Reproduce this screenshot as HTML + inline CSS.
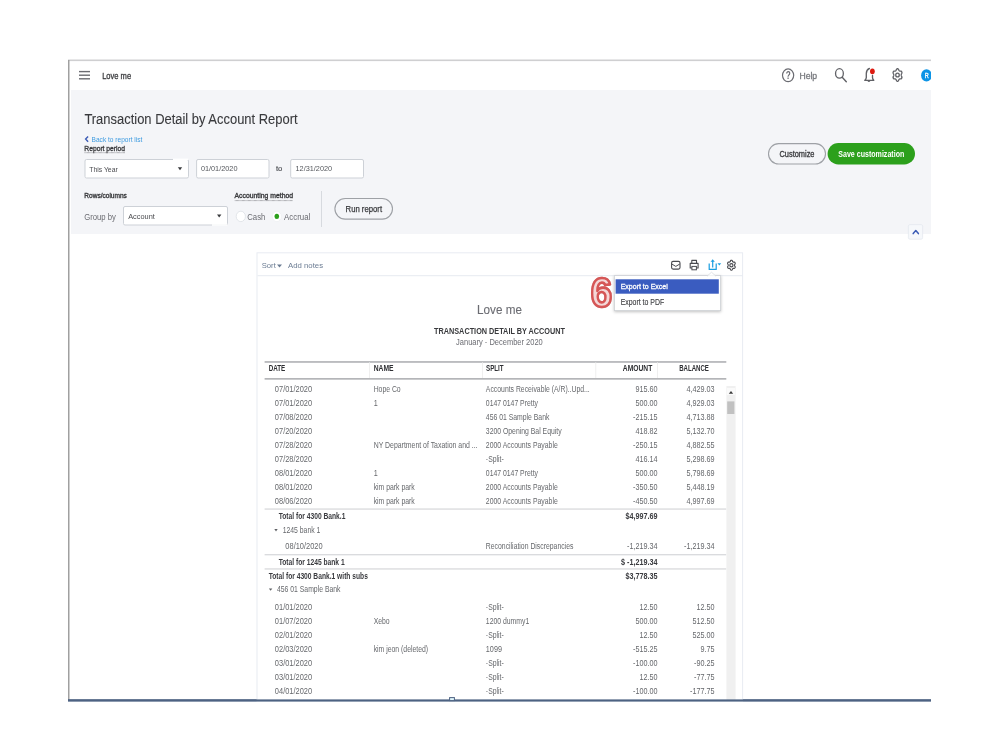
<!DOCTYPE html>
<html><head><meta charset="utf-8"><title>Transaction Detail by Account Report</title>
<style>html,body{margin:0;padding:0;background:#fff;width:999px;height:749px;overflow:hidden}
svg{display:block;will-change:transform} text{font-family:"Liberation Sans",sans-serif}</style></head>
<body><svg width="999" height="749" viewBox="0 0 999 749">
<rect x="0" y="0" width="999" height="749" fill="#ffffff" />
<rect x="68" y="60" width="863" height="640" fill="#ffffff" />
<rect x="71" y="90" width="860" height="144" fill="#f4f5f8" />
<rect x="68" y="59.5" width="863" height="1.6" fill="#cfcfd1" />
<rect x="68" y="60" width="1.5" height="640" fill="#a0a0a0" />
<rect x="68" y="699.4" width="863" height="2" fill="#4d6282" />
<rect x="79" y="70.89999999999999" width="11" height="1.4" fill="#6b6c72" />
<rect x="79" y="74.5" width="11" height="1.4" fill="#6b6c72" />
<rect x="79" y="78.1" width="11" height="1.4" fill="#6b6c72" />
<text x="102.14" y="79.00" font-size="9.10" fill="#393a3d" font-weight="400" textLength="28.98" lengthAdjust="spacingAndGlyphs" text-anchor="start" stroke="#393a3d" stroke-width="0.3" >Love me</text>
<ellipse cx="788.1" cy="75.3" rx="5.6" ry="6.4" fill="none" stroke="#6b6c72" stroke-width="1.2"/>
<text x="788.20" y="79.30" font-size="10.50" fill="#6b6c72" font-weight="700" textLength="5.00" lengthAdjust="spacingAndGlyphs" text-anchor="middle" stroke="#6b6c72" stroke-width="0" >?</text>
<text x="799.42" y="78.75" font-size="9.45" fill="#75777c" font-weight="400" textLength="17.76" lengthAdjust="spacingAndGlyphs" text-anchor="start" stroke="#75777c" stroke-width="0.3" >Help</text>
<ellipse cx="839.45" cy="73.4" rx="3.9" ry="4.7" fill="none" stroke="#606166" stroke-width="1.3"/>
<line x1="842.2" y1="77.2" x2="846.3" y2="81.7" stroke="#606166" stroke-width="1.4" stroke-linecap="round"/>
<path d="M869.4,68.5 Q866.5,69.6 866.3,73.4 L866.3,77.6 Q866.1,79.4 864.8,80.3 L873.8,80.3 Q872.6,79.4 872.5,77.6 L872.5,75.4" fill="none" stroke="#606166" stroke-width="1.35" stroke-linejoin="round" stroke-linecap="round"/>
<path d="M867.3,80.8 Q868.9,83.2 870.5,80.8 Z" fill="#606166"/>
<ellipse cx="872.4" cy="71.35" rx="2.4" ry="2.9" fill="#dd1a10"/>
<path d="M901.22,75.00 L901.24,75.32 L901.30,75.64 L901.41,76.00 L901.67,76.43 L901.90,76.92 L901.93,77.36 L901.87,77.77 L901.74,78.15 L901.55,78.48 L901.30,78.75 L900.99,78.94 L900.55,78.92 L900.13,78.85 L899.83,78.91 L899.58,79.01 L899.36,79.15 L899.16,79.33 L898.97,79.55 L898.78,79.85 L898.62,80.36 L898.41,80.85 L898.13,81.11 L897.82,81.25 L897.50,81.30 L897.18,81.25 L896.87,81.11 L896.59,80.85 L896.38,80.36 L896.22,79.85 L896.03,79.55 L895.84,79.33 L895.64,79.15 L895.42,79.01 L895.17,78.91 L894.87,78.85 L894.45,78.92 L894.01,78.94 L893.70,78.75 L893.45,78.48 L893.26,78.15 L893.13,77.77 L893.07,77.36 L893.10,76.92 L893.33,76.43 L893.59,76.00 L893.70,75.64 L893.76,75.32 L893.78,75.00 L893.76,74.68 L893.70,74.36 L893.59,74.00 L893.33,73.57 L893.10,73.08 L893.07,72.64 L893.13,72.23 L893.26,71.85 L893.45,71.52 L893.70,71.25 L894.01,71.06 L894.45,71.08 L894.87,71.15 L895.17,71.09 L895.42,70.99 L895.64,70.85 L895.84,70.67 L896.03,70.45 L896.22,70.15 L896.38,69.64 L896.59,69.15 L896.87,68.89 L897.18,68.75 L897.50,68.70 L897.82,68.75 L898.13,68.89 L898.41,69.15 L898.62,69.64 L898.78,70.15 L898.97,70.45 L899.16,70.67 L899.36,70.85 L899.58,70.99 L899.83,71.09 L900.13,71.15 L900.55,71.08 L900.99,71.06 L901.30,71.25 L901.55,71.52 L901.74,71.85 L901.87,72.23 L901.93,72.64 L901.90,73.08 L901.67,73.57 L901.41,74.00 L901.30,74.36 L901.24,74.68 Z" fill="none" stroke="#606166" stroke-width="1.3" stroke-linejoin="round"/>
<ellipse cx="897.5" cy="75.0" rx="1.76" ry="1.95" fill="none" stroke="#606166" stroke-width="1.3"/>
<ellipse cx="926.5" cy="75.4" rx="5.4" ry="6.2" fill="#0d94e6"/>
<text x="926.80" y="78.20" font-size="8.00" fill="#ffffff" font-weight="400" textLength="4.00" lengthAdjust="spacingAndGlyphs" text-anchor="middle" stroke="#ffffff" stroke-width="0.35" >R</text>
<rect x="931" y="55" width="68" height="60" fill="#ffffff" />
<text x="84.39" y="123.90" font-size="15.20" fill="#393a3d" font-weight="400" textLength="213.22" lengthAdjust="spacingAndGlyphs" text-anchor="start" stroke="#393a3d" stroke-width="0.1" >Transaction Detail by Account Report</text>
<path d="M88.1,136.4 L85.6,139.1 L88.1,141.8" fill="none" stroke="#3b5bb5" stroke-width="1.4"/>
<text x="91.59" y="141.80" font-size="7.80" fill="#3d9be0" font-weight="400" textLength="50.72" lengthAdjust="spacingAndGlyphs" text-anchor="start" stroke="#3d9be0" stroke-width="0" >Back to report list</text>
<text x="84.28" y="150.60" font-size="8.00" fill="#393a3d" font-weight="400" textLength="40.84" lengthAdjust="spacingAndGlyphs" text-anchor="start" stroke="#393a3d" stroke-width="0.35" >Report period</text>
<line x1="84.6" y1="152.7" x2="125" y2="152.7" stroke="#77797e" stroke-width="0.8" stroke-dasharray="0.7,0.5"/>
<rect x="85.0" y="159.5" width="103.5" height="18.5" fill="#ffffff" stroke="#cdd1d7" stroke-width="1" rx="1.5"/>
<rect x="173" y="158.6" width="15.3" height="1.6" fill="#ffffff" />
<text x="89.20" y="171.50" font-size="7.60" fill="#4a4b4f" font-weight="400" textLength="28.61" lengthAdjust="spacingAndGlyphs" text-anchor="start" stroke="#4a4b4f" stroke-width="0" >This Year</text>
<path d="M177.8,167.3 L182.2,167.3 L180,170.3 Z" fill="#393a3d"/>
<rect x="196.6" y="159.5" width="72.4" height="18.5" fill="#ffffff" stroke="#cdd1d7" stroke-width="1" rx="1.5"/>
<text x="200.90" y="171.10" font-size="7.60" fill="#54575c" font-weight="400" textLength="36.61" lengthAdjust="spacingAndGlyphs" text-anchor="start" stroke="#54575c" stroke-width="0" >01/01/2020</text>
<text x="275.90" y="171.10" font-size="7.60" fill="#55575c" font-weight="400" textLength="6.41" lengthAdjust="spacingAndGlyphs" text-anchor="start" stroke="#55575c" stroke-width="0.2" >to</text>
<rect x="290.7" y="159.5" width="72.8" height="18.5" fill="#ffffff" stroke="#cdd1d7" stroke-width="1" rx="1.5"/>
<text x="295.50" y="171.10" font-size="7.60" fill="#54575c" font-weight="400" textLength="36.61" lengthAdjust="spacingAndGlyphs" text-anchor="start" stroke="#54575c" stroke-width="0" >12/31/2020</text>
<text x="84.33" y="198.20" font-size="6.80" fill="#393a3d" font-weight="400" textLength="42.54" lengthAdjust="spacingAndGlyphs" text-anchor="start" stroke="#393a3d" stroke-width="0.35" >Rows/columns</text>
<text x="84.26" y="219.60" font-size="8.60" fill="#6b6c72" font-weight="400" textLength="31.69" lengthAdjust="spacingAndGlyphs" text-anchor="start" stroke="#6b6c72" stroke-width="0" >Group by</text>
<rect x="123.5" y="206.5" width="104" height="18.5" fill="#ffffff" stroke="#cdd1d7" stroke-width="1" rx="1.5"/>
<rect x="212" y="224.2" width="15.3" height="1.6" fill="#ffffff" />
<text x="128.20" y="218.60" font-size="7.60" fill="#4a4b4f" font-weight="400" textLength="26.61" lengthAdjust="spacingAndGlyphs" text-anchor="start" stroke="#4a4b4f" stroke-width="0" >Account</text>
<path d="M217,214.6 L221.4,214.6 L219.2,217.6 Z" fill="#393a3d"/>
<text x="234.52" y="198.00" font-size="7.00" fill="#393a3d" font-weight="400" textLength="58.56" lengthAdjust="spacingAndGlyphs" text-anchor="start" stroke="#393a3d" stroke-width="0.35" >Accounting method</text>
<line x1="234.8" y1="200.6" x2="292.8" y2="200.6" stroke="#77797e" stroke-width="0.8" stroke-dasharray="0.7,0.5"/>
<ellipse cx="240.8" cy="216.4" rx="4.6" ry="5.2" fill="#ffffff" stroke="#dcdfe4" stroke-width="0.8"/>
<text x="247.26" y="219.60" font-size="8.60" fill="#6b6c72" font-weight="400" textLength="18.09" lengthAdjust="spacingAndGlyphs" text-anchor="start" stroke="#6b6c72" stroke-width="0" >Cash</text>
<ellipse cx="276.8" cy="216.4" rx="4.6" ry="5.2" fill="#ffffff" stroke="#eef0f2" stroke-width="0.8"/>
<ellipse cx="276.8" cy="216.4" rx="2.3" ry="2.6" fill="#2ca01c"/>
<text x="284.06" y="219.60" font-size="8.60" fill="#6b6c72" font-weight="400" textLength="26.29" lengthAdjust="spacingAndGlyphs" text-anchor="start" stroke="#6b6c72" stroke-width="0" >Accrual</text>
<rect x="321" y="191" width="0.9" height="36" fill="#d4d7dc" />
<rect x="334.9" y="198.5" width="57.6" height="20.6" rx="10.3" fill="#f4f5f8" stroke="#9ea1a6" stroke-width="1.1"/>
<text x="363.80" y="212.00" font-size="8.80" fill="#393a3d" font-weight="400" textLength="36.50" lengthAdjust="spacingAndGlyphs" text-anchor="middle" stroke="#393a3d" stroke-width="0.25" >Run report</text>
<rect x="768.5" y="143.6" width="57" height="20.4" rx="10.2" fill="#f4f5f8" stroke="#9ea1a6" stroke-width="1.1"/>
<text x="797.00" y="157.00" font-size="8.20" fill="#393a3d" font-weight="400" textLength="35.00" lengthAdjust="spacingAndGlyphs" text-anchor="middle" stroke="#393a3d" stroke-width="0.3" >Customize</text>
<rect x="827.6" y="143" width="87.4" height="21.4" rx="10.7" fill="#2ca01c"/>
<text x="871.30" y="157.00" font-size="8.20" fill="#ffffff" font-weight="700" textLength="66.00" lengthAdjust="spacingAndGlyphs" text-anchor="middle" stroke="#ffffff" stroke-width="0" >Save customization</text>
<rect x="908.4" y="224.6" width="14.2" height="14.6" rx="1.5" fill="#f6f8fb" stroke="#e3e7ee" stroke-width="0.7"/>
<path d="M913.2,233.6 L915.8,230.6 L918.4,233.6" fill="none" stroke="#3b5bb5" stroke-width="1.5" stroke-linecap="round" stroke-linejoin="round"/>
<rect x="257" y="252.8" width="485.6" height="448" fill="#ffffff" stroke="#e8ecf2" stroke-width="1"/>
<rect x="257.5" y="275.2" width="485" height="1" fill="#e6eaf0" />
<text x="261.71" y="268.30" font-size="7.20" fill="#6b7c93" font-weight="400" textLength="14.08" lengthAdjust="spacingAndGlyphs" text-anchor="start" stroke="#6b7c93" stroke-width="0" >Sort</text>
<path d="M277,264.4 L282,264.4 L279.5,267.4 Z" fill="#6b7c93"/>
<text x="288.01" y="268.30" font-size="7.20" fill="#6b7c93" font-weight="400" textLength="35.08" lengthAdjust="spacingAndGlyphs" text-anchor="start" stroke="#6b7c93" stroke-width="0" >Add notes</text>
<rect x="671.6" y="261.4" width="8.4" height="7.7" rx="1.5" fill="none" stroke="#4a4b50" stroke-width="1.1"/>
<path d="M671.8,264 L675.8,266.4 L679.8,264" fill="none" stroke="#4a4b50" stroke-width="1" stroke-linejoin="round"/>
<path d="M691.8,263.2 L691.8,260.4 L696.5,260.4 L696.5,263.2 M690.2,263.4 L698.1,263.4 L698.1,268 L690.2,268 Z" fill="none" stroke="#4a4b50" stroke-width="1.1" stroke-linejoin="round"/>
<rect x="691.9" y="266.4" width="4.5" height="3.4" fill="#ffffff" stroke="#4a4b50" stroke-width="1"/>
<path d="M709.2,263.4 L709.2,269.4 L716.2,269.4 L716.2,263.4" fill="none" stroke="#1a9ee0" stroke-width="1.2" stroke-linejoin="round"/>
<path d="M712.7,267.4 L712.7,261" fill="none" stroke="#1a9ee0" stroke-width="1.2"/>
<path d="M710.6,261.8 L712.7,259.2 L714.8,261.8 Z" fill="#1a9ee0"/>
<path d="M717.5,263.3 L721.2,263.3 L719.35,265.6 Z" fill="#1a9ee0"/>
<path d="M734.59,265.20 L734.61,265.45 L734.66,265.71 L734.75,265.99 L734.97,266.34 L735.17,266.72 L735.19,267.07 L735.15,267.40 L735.04,267.70 L734.87,267.96 L734.66,268.18 L734.39,268.32 L734.01,268.31 L733.65,268.25 L733.40,268.30 L733.19,268.38 L733.00,268.49 L732.82,268.63 L732.66,268.81 L732.50,269.05 L732.36,269.45 L732.18,269.85 L731.94,270.05 L731.67,270.16 L731.40,270.20 L731.13,270.16 L730.86,270.05 L730.62,269.85 L730.44,269.45 L730.30,269.05 L730.14,268.81 L729.98,268.63 L729.80,268.49 L729.61,268.38 L729.40,268.30 L729.15,268.25 L728.79,268.31 L728.41,268.32 L728.14,268.18 L727.93,267.96 L727.76,267.70 L727.65,267.40 L727.61,267.07 L727.63,266.72 L727.83,266.34 L728.05,265.99 L728.14,265.71 L728.19,265.45 L728.21,265.20 L728.19,264.95 L728.14,264.69 L728.05,264.41 L727.83,264.06 L727.63,263.68 L727.61,263.33 L727.65,263.00 L727.76,262.70 L727.93,262.44 L728.14,262.22 L728.41,262.08 L728.79,262.09 L729.15,262.15 L729.40,262.10 L729.61,262.02 L729.80,261.91 L729.98,261.77 L730.14,261.59 L730.30,261.35 L730.44,260.95 L730.62,260.55 L730.86,260.35 L731.13,260.24 L731.40,260.20 L731.67,260.24 L731.94,260.35 L732.18,260.55 L732.36,260.95 L732.50,261.35 L732.66,261.59 L732.82,261.77 L733.00,261.91 L733.19,262.02 L733.40,262.10 L733.65,262.15 L734.01,262.09 L734.39,262.08 L734.66,262.22 L734.87,262.44 L735.04,262.70 L735.15,263.00 L735.19,263.33 L735.17,263.68 L734.97,264.06 L734.75,264.41 L734.66,264.69 L734.61,264.95 Z" fill="none" stroke="#4a4b50" stroke-width="1.15" stroke-linejoin="round"/>
<ellipse cx="731.4" cy="265.2" rx="1.60" ry="1.65" fill="none" stroke="#4a4b50" stroke-width="1.15"/>
<rect x="614.4" y="275.6" width="106.2" height="35" fill="#ffffff" stroke="#cfd2d6" stroke-width="0.8" style="filter:drop-shadow(0 1px 1.5px rgba(0,0,0,0.25))"/>
<path d="M707.5,275.9 L711.5,272.2 L715.5,275.9 Z" fill="#ffffff" stroke="#cfd2d6" stroke-width="0.6"/>
<rect x="707.8" y="275.7" width="7.4" height="1.2" fill="#ffffff" />
<rect x="615.6" y="279.3" width="103.2" height="14.4" fill="#3a5cc0" />
<text x="620.68" y="289.40" font-size="8.00" fill="#ffffff" font-weight="400" textLength="47.14" lengthAdjust="spacingAndGlyphs" text-anchor="start" stroke="#ffffff" stroke-width="0.3" >Export to Excel</text>
<text x="620.66" y="304.50" font-size="8.60" fill="#393a3d" font-weight="400" textLength="43.49" lengthAdjust="spacingAndGlyphs" text-anchor="start" stroke="#393a3d" stroke-width="0.1" >Export to PDF</text>
<text x="601.4" y="306.6" font-size="42" font-weight="700" text-anchor="middle" textLength="21.4" lengthAdjust="spacingAndGlyphs" fill="#f4d8d8" stroke="#d65656" stroke-width="2.6" stroke-linejoin="round" style="filter:drop-shadow(0.5px 0.8px 0.5px rgba(110,0,0,0.35))" font-family="Liberation Sans">6</text>
<text x="477.08" y="314.00" font-size="13.00" fill="#6b6c72" font-weight="400" textLength="44.84" lengthAdjust="spacingAndGlyphs" text-anchor="start" stroke="#6b6c72" stroke-width="0.1" >Love me</text>
<text x="434.03" y="334.40" font-size="9.20" fill="#393a3d" font-weight="700" textLength="130.94" lengthAdjust="spacingAndGlyphs" text-anchor="start" stroke="#393a3d" stroke-width="0" >TRANSACTION DETAIL BY ACCOUNT</text>
<text x="456.06" y="345.00" font-size="8.60" fill="#6b6c72" font-weight="400" textLength="86.69" lengthAdjust="spacingAndGlyphs" text-anchor="start" stroke="#6b6c72" stroke-width="0" >January - December 2020</text>
<rect x="264.6" y="361.1" width="461.69999999999993" height="1.7" fill="#b4b5b8" />
<rect x="264.6" y="378.0" width="461.69999999999993" height="1.7" fill="#b4b5b8" />
<rect x="369" y="362.2" width="0.8" height="15.8" fill="#ebebeb" />
<rect x="482" y="362.2" width="0.8" height="15.8" fill="#ebebeb" />
<rect x="595.4" y="362.2" width="0.8" height="15.8" fill="#ebebeb" />
<rect x="657.2" y="362.2" width="0.8" height="15.8" fill="#ebebeb" />
<text x="268.67" y="371.30" font-size="8.30" fill="#2e2f33" font-weight="700" textLength="16.66" lengthAdjust="spacingAndGlyphs" text-anchor="start" stroke="#2e2f33" stroke-width="0" >DATE</text>
<text x="373.67" y="371.30" font-size="8.30" fill="#2e2f33" font-weight="700" textLength="19.86" lengthAdjust="spacingAndGlyphs" text-anchor="start" stroke="#2e2f33" stroke-width="0" >NAME</text>
<text x="486.07" y="371.30" font-size="8.30" fill="#2e2f33" font-weight="700" textLength="17.56" lengthAdjust="spacingAndGlyphs" text-anchor="start" stroke="#2e2f33" stroke-width="0" >SPLIT</text>
<text x="652.23" y="371.30" font-size="8.30" fill="#2e2f33" font-weight="700" textLength="29.36" lengthAdjust="spacingAndGlyphs" text-anchor="end" stroke="#2e2f33" stroke-width="0" >AMOUNT</text>
<text x="708.93" y="371.30" font-size="8.30" fill="#2e2f33" font-weight="700" textLength="29.76" lengthAdjust="spacingAndGlyphs" text-anchor="end" stroke="#2e2f33" stroke-width="0" >BALANCE</text>
<text x="274.86" y="392.00" font-size="8.40" fill="#66686c" font-weight="400" textLength="37.27" lengthAdjust="spacingAndGlyphs" text-anchor="start" stroke="#66686c" stroke-width="0" >07/01/2020</text>
<text x="373.66" y="392.00" font-size="8.40" fill="#66686c" font-weight="400" textLength="27.02" lengthAdjust="spacingAndGlyphs" text-anchor="start" stroke="#66686c" stroke-width="0" >Hope Co</text>
<text x="485.86" y="392.00" font-size="8.40" fill="#66686c" font-weight="400" textLength="103.87" lengthAdjust="spacingAndGlyphs" text-anchor="start" stroke="#66686c" stroke-width="0" >Accounts Receivable (A/R)..Upd...</text>
<text x="657.54" y="392.00" font-size="8.40" fill="#66686c" font-weight="400" textLength="22.10" lengthAdjust="spacingAndGlyphs" text-anchor="end" stroke="#66686c" stroke-width="0" >915.60</text>
<text x="714.54" y="392.00" font-size="8.40" fill="#66686c" font-weight="400" textLength="28.12" lengthAdjust="spacingAndGlyphs" text-anchor="end" stroke="#66686c" stroke-width="0" >4,429.03</text>
<text x="274.86" y="406.05" font-size="8.40" fill="#66686c" font-weight="400" textLength="37.27" lengthAdjust="spacingAndGlyphs" text-anchor="start" stroke="#66686c" stroke-width="0" >07/01/2020</text>
<text x="373.66" y="406.05" font-size="8.40" fill="#66686c" font-weight="400" textLength="4.02" lengthAdjust="spacingAndGlyphs" text-anchor="start" stroke="#66686c" stroke-width="0" >1</text>
<text x="485.86" y="406.05" font-size="8.40" fill="#66686c" font-weight="400" textLength="52.14" lengthAdjust="spacingAndGlyphs" text-anchor="start" stroke="#66686c" stroke-width="0" >0147 0147 Pretty</text>
<text x="657.54" y="406.05" font-size="8.40" fill="#66686c" font-weight="400" textLength="22.10" lengthAdjust="spacingAndGlyphs" text-anchor="end" stroke="#66686c" stroke-width="0" >500.00</text>
<text x="714.54" y="406.05" font-size="8.40" fill="#66686c" font-weight="400" textLength="28.12" lengthAdjust="spacingAndGlyphs" text-anchor="end" stroke="#66686c" stroke-width="0" >4,929.03</text>
<text x="274.86" y="420.10" font-size="8.40" fill="#66686c" font-weight="400" textLength="37.27" lengthAdjust="spacingAndGlyphs" text-anchor="start" stroke="#66686c" stroke-width="0" >07/08/2020</text>
<text x="485.86" y="420.10" font-size="8.40" fill="#66686c" font-weight="400" textLength="63.56" lengthAdjust="spacingAndGlyphs" text-anchor="start" stroke="#66686c" stroke-width="0" >456 01 Sample Bank</text>
<text x="657.54" y="420.10" font-size="8.40" fill="#66686c" font-weight="400" textLength="24.50" lengthAdjust="spacingAndGlyphs" text-anchor="end" stroke="#66686c" stroke-width="0" >-215.15</text>
<text x="714.54" y="420.10" font-size="8.40" fill="#66686c" font-weight="400" textLength="28.12" lengthAdjust="spacingAndGlyphs" text-anchor="end" stroke="#66686c" stroke-width="0" >4,713.88</text>
<text x="274.86" y="434.15" font-size="8.40" fill="#66686c" font-weight="400" textLength="37.27" lengthAdjust="spacingAndGlyphs" text-anchor="start" stroke="#66686c" stroke-width="0" >07/20/2020</text>
<text x="485.86" y="434.15" font-size="8.40" fill="#66686c" font-weight="400" textLength="75.74" lengthAdjust="spacingAndGlyphs" text-anchor="start" stroke="#66686c" stroke-width="0" >3200 Opening Bal Equity</text>
<text x="657.54" y="434.15" font-size="8.40" fill="#66686c" font-weight="400" textLength="22.10" lengthAdjust="spacingAndGlyphs" text-anchor="end" stroke="#66686c" stroke-width="0" >418.82</text>
<text x="714.54" y="434.15" font-size="8.40" fill="#66686c" font-weight="400" textLength="28.12" lengthAdjust="spacingAndGlyphs" text-anchor="end" stroke="#66686c" stroke-width="0" >5,132.70</text>
<text x="274.86" y="448.20" font-size="8.40" fill="#66686c" font-weight="400" textLength="37.27" lengthAdjust="spacingAndGlyphs" text-anchor="start" stroke="#66686c" stroke-width="0" >07/28/2020</text>
<text x="373.66" y="448.20" font-size="8.40" fill="#66686c" font-weight="400" textLength="103.88" lengthAdjust="spacingAndGlyphs" text-anchor="start" stroke="#66686c" stroke-width="0" >NY Department of Taxation and ...</text>
<text x="485.86" y="448.20" font-size="8.40" fill="#66686c" font-weight="400" textLength="71.93" lengthAdjust="spacingAndGlyphs" text-anchor="start" stroke="#66686c" stroke-width="0" >2000 Accounts Payable</text>
<text x="657.54" y="448.20" font-size="8.40" fill="#66686c" font-weight="400" textLength="24.50" lengthAdjust="spacingAndGlyphs" text-anchor="end" stroke="#66686c" stroke-width="0" >-250.15</text>
<text x="714.54" y="448.20" font-size="8.40" fill="#66686c" font-weight="400" textLength="28.12" lengthAdjust="spacingAndGlyphs" text-anchor="end" stroke="#66686c" stroke-width="0" >4,882.55</text>
<text x="274.86" y="462.25" font-size="8.40" fill="#66686c" font-weight="400" textLength="37.27" lengthAdjust="spacingAndGlyphs" text-anchor="start" stroke="#66686c" stroke-width="0" >07/28/2020</text>
<text x="485.86" y="462.25" font-size="8.40" fill="#66686c" font-weight="400" textLength="17.88" lengthAdjust="spacingAndGlyphs" text-anchor="start" stroke="#66686c" stroke-width="0" >-Split-</text>
<text x="657.54" y="462.25" font-size="8.40" fill="#66686c" font-weight="400" textLength="22.10" lengthAdjust="spacingAndGlyphs" text-anchor="end" stroke="#66686c" stroke-width="0" >416.14</text>
<text x="714.54" y="462.25" font-size="8.40" fill="#66686c" font-weight="400" textLength="28.12" lengthAdjust="spacingAndGlyphs" text-anchor="end" stroke="#66686c" stroke-width="0" >5,298.69</text>
<text x="274.86" y="476.30" font-size="8.40" fill="#66686c" font-weight="400" textLength="37.27" lengthAdjust="spacingAndGlyphs" text-anchor="start" stroke="#66686c" stroke-width="0" >08/01/2020</text>
<text x="373.66" y="476.30" font-size="8.40" fill="#66686c" font-weight="400" textLength="4.02" lengthAdjust="spacingAndGlyphs" text-anchor="start" stroke="#66686c" stroke-width="0" >1</text>
<text x="485.86" y="476.30" font-size="8.40" fill="#66686c" font-weight="400" textLength="52.14" lengthAdjust="spacingAndGlyphs" text-anchor="start" stroke="#66686c" stroke-width="0" >0147 0147 Pretty</text>
<text x="657.54" y="476.30" font-size="8.40" fill="#66686c" font-weight="400" textLength="22.10" lengthAdjust="spacingAndGlyphs" text-anchor="end" stroke="#66686c" stroke-width="0" >500.00</text>
<text x="714.54" y="476.30" font-size="8.40" fill="#66686c" font-weight="400" textLength="28.12" lengthAdjust="spacingAndGlyphs" text-anchor="end" stroke="#66686c" stroke-width="0" >5,798.69</text>
<text x="274.86" y="490.35" font-size="8.40" fill="#66686c" font-weight="400" textLength="37.27" lengthAdjust="spacingAndGlyphs" text-anchor="start" stroke="#66686c" stroke-width="0" >08/01/2020</text>
<text x="373.66" y="490.35" font-size="8.40" fill="#66686c" font-weight="400" textLength="41.09" lengthAdjust="spacingAndGlyphs" text-anchor="start" stroke="#66686c" stroke-width="0" >kim park park</text>
<text x="485.86" y="490.35" font-size="8.40" fill="#66686c" font-weight="400" textLength="71.93" lengthAdjust="spacingAndGlyphs" text-anchor="start" stroke="#66686c" stroke-width="0" >2000 Accounts Payable</text>
<text x="657.54" y="490.35" font-size="8.40" fill="#66686c" font-weight="400" textLength="24.50" lengthAdjust="spacingAndGlyphs" text-anchor="end" stroke="#66686c" stroke-width="0" >-350.50</text>
<text x="714.54" y="490.35" font-size="8.40" fill="#66686c" font-weight="400" textLength="28.12" lengthAdjust="spacingAndGlyphs" text-anchor="end" stroke="#66686c" stroke-width="0" >5,448.19</text>
<text x="274.86" y="504.40" font-size="8.40" fill="#66686c" font-weight="400" textLength="37.27" lengthAdjust="spacingAndGlyphs" text-anchor="start" stroke="#66686c" stroke-width="0" >08/06/2020</text>
<text x="373.66" y="504.40" font-size="8.40" fill="#66686c" font-weight="400" textLength="41.09" lengthAdjust="spacingAndGlyphs" text-anchor="start" stroke="#66686c" stroke-width="0" >kim park park</text>
<text x="485.86" y="504.40" font-size="8.40" fill="#66686c" font-weight="400" textLength="71.93" lengthAdjust="spacingAndGlyphs" text-anchor="start" stroke="#66686c" stroke-width="0" >2000 Accounts Payable</text>
<text x="657.54" y="504.40" font-size="8.40" fill="#66686c" font-weight="400" textLength="24.50" lengthAdjust="spacingAndGlyphs" text-anchor="end" stroke="#66686c" stroke-width="0" >-450.50</text>
<text x="714.54" y="504.40" font-size="8.40" fill="#66686c" font-weight="400" textLength="28.12" lengthAdjust="spacingAndGlyphs" text-anchor="end" stroke="#66686c" stroke-width="0" >4,997.69</text>
<rect x="264.6" y="508.5" width="461.69999999999993" height="1.1" fill="#d2d3d6" />
<text x="278.66" y="519.30" font-size="8.40" fill="#3a3b3f" font-weight="700" textLength="66.75" lengthAdjust="spacingAndGlyphs" text-anchor="start" stroke="#3a3b3f" stroke-width="0" >Total for 4300 Bank.1</text>
<text x="657.54" y="519.30" font-size="8.40" fill="#3a3b3f" font-weight="700" textLength="32.14" lengthAdjust="spacingAndGlyphs" text-anchor="end" stroke="#3a3b3f" stroke-width="0" >$4,997.69</text>
<path d="M274.3,529.0 L277.7,529.0 L276,531.4 Z" fill="#606266"/>
<text x="282.66" y="533.00" font-size="8.40" fill="#66686c" font-weight="400" textLength="37.69" lengthAdjust="spacingAndGlyphs" text-anchor="start" stroke="#66686c" stroke-width="0" >1245 bank 1</text>
<text x="285.36" y="549.40" font-size="8.40" fill="#66686c" font-weight="400" textLength="37.27" lengthAdjust="spacingAndGlyphs" text-anchor="start" stroke="#66686c" stroke-width="0" >08/10/2020</text>
<text x="485.86" y="549.40" font-size="8.40" fill="#66686c" font-weight="400" textLength="87.52" lengthAdjust="spacingAndGlyphs" text-anchor="start" stroke="#66686c" stroke-width="0" >Reconciliation Discrepancies</text>
<text x="657.54" y="549.40" font-size="8.40" fill="#66686c" font-weight="400" textLength="30.53" lengthAdjust="spacingAndGlyphs" text-anchor="end" stroke="#66686c" stroke-width="0" >-1,219.34</text>
<text x="714.54" y="549.40" font-size="8.40" fill="#66686c" font-weight="400" textLength="30.53" lengthAdjust="spacingAndGlyphs" text-anchor="end" stroke="#66686c" stroke-width="0" >-1,219.34</text>
<rect x="264.6" y="554.2" width="461.69999999999993" height="1.1" fill="#d2d3d6" />
<text x="278.66" y="565.00" font-size="8.40" fill="#3a3b3f" font-weight="700" textLength="66.01" lengthAdjust="spacingAndGlyphs" text-anchor="start" stroke="#3a3b3f" stroke-width="0" >Total for 1245 bank 1</text>
<text x="657.54" y="565.00" font-size="8.40" fill="#3a3b3f" font-weight="700" textLength="36.55" lengthAdjust="spacingAndGlyphs" text-anchor="end" stroke="#3a3b3f" stroke-width="0" >$ -1,219.34</text>
<rect x="264.6" y="568.4" width="461.69999999999993" height="1.1" fill="#d2d3d6" />
<text x="268.66" y="578.70" font-size="8.40" fill="#3a3b3f" font-weight="700" textLength="99.20" lengthAdjust="spacingAndGlyphs" text-anchor="start" stroke="#3a3b3f" stroke-width="0" >Total for 4300 Bank.1 with subs</text>
<text x="657.54" y="578.70" font-size="8.40" fill="#3a3b3f" font-weight="700" textLength="32.14" lengthAdjust="spacingAndGlyphs" text-anchor="end" stroke="#3a3b3f" stroke-width="0" >$3,778.35</text>
<path d="M268.9,588.4 L272.3,588.4 L270.6,590.8 Z" fill="#606266"/>
<text x="276.96" y="592.40" font-size="8.40" fill="#66686c" font-weight="400" textLength="63.56" lengthAdjust="spacingAndGlyphs" text-anchor="start" stroke="#66686c" stroke-width="0" >456 01 Sample Bank</text>
<text x="274.86" y="609.80" font-size="8.40" fill="#66686c" font-weight="400" textLength="37.27" lengthAdjust="spacingAndGlyphs" text-anchor="start" stroke="#66686c" stroke-width="0" >01/01/2020</text>
<text x="485.86" y="609.80" font-size="8.40" fill="#66686c" font-weight="400" textLength="17.88" lengthAdjust="spacingAndGlyphs" text-anchor="start" stroke="#66686c" stroke-width="0" >-Split-</text>
<text x="657.54" y="609.80" font-size="8.40" fill="#66686c" font-weight="400" textLength="18.08" lengthAdjust="spacingAndGlyphs" text-anchor="end" stroke="#66686c" stroke-width="0" >12.50</text>
<text x="714.54" y="609.80" font-size="8.40" fill="#66686c" font-weight="400" textLength="18.08" lengthAdjust="spacingAndGlyphs" text-anchor="end" stroke="#66686c" stroke-width="0" >12.50</text>
<text x="274.86" y="623.83" font-size="8.40" fill="#66686c" font-weight="400" textLength="37.27" lengthAdjust="spacingAndGlyphs" text-anchor="start" stroke="#66686c" stroke-width="0" >01/07/2020</text>
<text x="373.66" y="623.83" font-size="8.40" fill="#66686c" font-weight="400" textLength="15.99" lengthAdjust="spacingAndGlyphs" text-anchor="start" stroke="#66686c" stroke-width="0" >Xebo</text>
<text x="485.86" y="623.83" font-size="8.40" fill="#66686c" font-weight="400" textLength="43.38" lengthAdjust="spacingAndGlyphs" text-anchor="start" stroke="#66686c" stroke-width="0" >1200 dummy1</text>
<text x="657.54" y="623.83" font-size="8.40" fill="#66686c" font-weight="400" textLength="22.10" lengthAdjust="spacingAndGlyphs" text-anchor="end" stroke="#66686c" stroke-width="0" >500.00</text>
<text x="714.54" y="623.83" font-size="8.40" fill="#66686c" font-weight="400" textLength="22.10" lengthAdjust="spacingAndGlyphs" text-anchor="end" stroke="#66686c" stroke-width="0" >512.50</text>
<text x="274.86" y="637.86" font-size="8.40" fill="#66686c" font-weight="400" textLength="37.27" lengthAdjust="spacingAndGlyphs" text-anchor="start" stroke="#66686c" stroke-width="0" >02/01/2020</text>
<text x="485.86" y="637.86" font-size="8.40" fill="#66686c" font-weight="400" textLength="17.88" lengthAdjust="spacingAndGlyphs" text-anchor="start" stroke="#66686c" stroke-width="0" >-Split-</text>
<text x="657.54" y="637.86" font-size="8.40" fill="#66686c" font-weight="400" textLength="18.08" lengthAdjust="spacingAndGlyphs" text-anchor="end" stroke="#66686c" stroke-width="0" >12.50</text>
<text x="714.54" y="637.86" font-size="8.40" fill="#66686c" font-weight="400" textLength="22.10" lengthAdjust="spacingAndGlyphs" text-anchor="end" stroke="#66686c" stroke-width="0" >525.00</text>
<text x="274.86" y="651.89" font-size="8.40" fill="#66686c" font-weight="400" textLength="37.27" lengthAdjust="spacingAndGlyphs" text-anchor="start" stroke="#66686c" stroke-width="0" >02/03/2020</text>
<text x="373.66" y="651.89" font-size="8.40" fill="#66686c" font-weight="400" textLength="54.41" lengthAdjust="spacingAndGlyphs" text-anchor="start" stroke="#66686c" stroke-width="0" >kim jeon (deleted)</text>
<text x="485.86" y="651.89" font-size="8.40" fill="#66686c" font-weight="400" textLength="16.07" lengthAdjust="spacingAndGlyphs" text-anchor="start" stroke="#66686c" stroke-width="0" >1099</text>
<text x="657.54" y="651.89" font-size="8.40" fill="#66686c" font-weight="400" textLength="24.50" lengthAdjust="spacingAndGlyphs" text-anchor="end" stroke="#66686c" stroke-width="0" >-515.25</text>
<text x="714.54" y="651.89" font-size="8.40" fill="#66686c" font-weight="400" textLength="14.06" lengthAdjust="spacingAndGlyphs" text-anchor="end" stroke="#66686c" stroke-width="0" >9.75</text>
<text x="274.86" y="665.92" font-size="8.40" fill="#66686c" font-weight="400" textLength="37.27" lengthAdjust="spacingAndGlyphs" text-anchor="start" stroke="#66686c" stroke-width="0" >03/01/2020</text>
<text x="485.86" y="665.92" font-size="8.40" fill="#66686c" font-weight="400" textLength="17.88" lengthAdjust="spacingAndGlyphs" text-anchor="start" stroke="#66686c" stroke-width="0" >-Split-</text>
<text x="657.54" y="665.92" font-size="8.40" fill="#66686c" font-weight="400" textLength="24.50" lengthAdjust="spacingAndGlyphs" text-anchor="end" stroke="#66686c" stroke-width="0" >-100.00</text>
<text x="714.54" y="665.92" font-size="8.40" fill="#66686c" font-weight="400" textLength="20.48" lengthAdjust="spacingAndGlyphs" text-anchor="end" stroke="#66686c" stroke-width="0" >-90.25</text>
<text x="274.86" y="679.95" font-size="8.40" fill="#66686c" font-weight="400" textLength="37.27" lengthAdjust="spacingAndGlyphs" text-anchor="start" stroke="#66686c" stroke-width="0" >03/01/2020</text>
<text x="485.86" y="679.95" font-size="8.40" fill="#66686c" font-weight="400" textLength="17.88" lengthAdjust="spacingAndGlyphs" text-anchor="start" stroke="#66686c" stroke-width="0" >-Split-</text>
<text x="657.54" y="679.95" font-size="8.40" fill="#66686c" font-weight="400" textLength="18.08" lengthAdjust="spacingAndGlyphs" text-anchor="end" stroke="#66686c" stroke-width="0" >12.50</text>
<text x="714.54" y="679.95" font-size="8.40" fill="#66686c" font-weight="400" textLength="20.48" lengthAdjust="spacingAndGlyphs" text-anchor="end" stroke="#66686c" stroke-width="0" >-77.75</text>
<text x="274.86" y="693.98" font-size="8.40" fill="#66686c" font-weight="400" textLength="37.27" lengthAdjust="spacingAndGlyphs" text-anchor="start" stroke="#66686c" stroke-width="0" >04/01/2020</text>
<text x="485.86" y="693.98" font-size="8.40" fill="#66686c" font-weight="400" textLength="17.88" lengthAdjust="spacingAndGlyphs" text-anchor="start" stroke="#66686c" stroke-width="0" >-Split-</text>
<text x="657.54" y="693.98" font-size="8.40" fill="#66686c" font-weight="400" textLength="24.50" lengthAdjust="spacingAndGlyphs" text-anchor="end" stroke="#66686c" stroke-width="0" >-100.00</text>
<text x="714.54" y="693.98" font-size="8.40" fill="#66686c" font-weight="400" textLength="24.50" lengthAdjust="spacingAndGlyphs" text-anchor="end" stroke="#66686c" stroke-width="0" >-177.75</text>
<rect x="726.4" y="386" width="9.2" height="314" fill="#f0f0f0" />
<rect x="727" y="388" width="8" height="7" fill="#fafafa" />
<path d="M728.8,393.8 L733.2,393.8 L731,390.9 Z" fill="#3c3c3c"/>
<rect x="727.2" y="401.4" width="7.2" height="12.6" fill="#c1c1c1" />
<rect x="68" y="699.4" width="863" height="2" fill="#4d6282" />
<rect x="449.6" y="697.6" width="4.8" height="3" fill="#dff6fb" stroke="#4d6282" stroke-width="1"/>
</svg></body></html>
